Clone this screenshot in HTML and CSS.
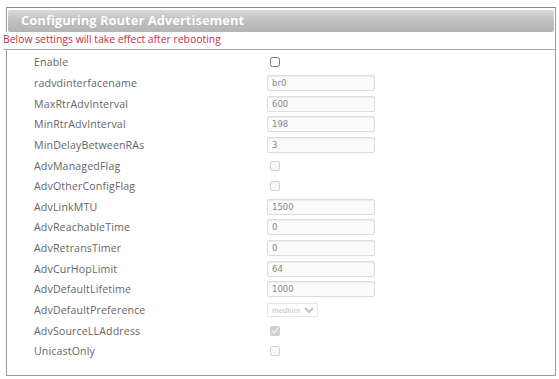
FILE: index.html
```html
<!DOCTYPE html>
<html>
<head>
  <title>Configuring Router Advertisement</title>
  <meta charset="UTF-8">
  <link rel="stylesheet" href="styles.css">
</head>
<body>
<div class="frame">
  <div class="title">Configuring Router Advertisement</div>
  <div class="note">Below settings will take effect after rebooting</div>
  <div class="form">
    <div class="row"><span class="lbl">Enable</span><input type="checkbox" class="chk"></div>
    <div class="row"><span class="lbl">radvdinterfacename</span><input type="text" class="txt" value="br0"></div>
    <div class="row"><span class="lbl">MaxRtrAdvInterval</span><input type="text" class="txt" value="600"></div>
    <div class="row"><span class="lbl">MinRtrAdvInterval</span><input type="text" class="txt" value="198"></div>
    <div class="row"><span class="lbl">MinDelayBetweenRAs</span><input type="text" class="txt" value="3"></div>
    <div class="row"><span class="lbl">AdvManagedFlag</span><input type="checkbox" class="chk" disabled></div>
    <div class="row"><span class="lbl">AdvOtherConfigFlag</span><input type="checkbox" class="chk" disabled></div>
    <div class="row"><span class="lbl">AdvLinkMTU</span><input type="text" class="txt" value="1500"></div>
    <div class="row"><span class="lbl">AdvReachableTime</span><input type="text" class="txt" value="0"></div>
    <div class="row"><span class="lbl">AdvRetransTimer</span><input type="text" class="txt" value="0"></div>
    <div class="row"><span class="lbl">AdvCurHopLimit</span><input type="text" class="txt" value="64"></div>
    <div class="row"><span class="lbl">AdvDefaultLifetime</span><input type="text" class="txt" value="1000"></div>
    <div class="row"><span class="lbl">AdvDefaultPreference</span><select class="sel" disabled><option>medium</option></select></div>
    <div class="row"><span class="lbl">AdvSourceLLAddress</span><input type="checkbox" class="chk" checked disabled></div>
    <div class="row"><span class="lbl">UnicastOnly</span><input type="checkbox" class="chk" disabled></div>
  </div>
</div>
</body>
</html>
```

FILE: styles.css
```css
body {
  margin: 0;
  font-family: "Open Sans", Arial, sans-serif;
  background: #fff;
}
.frame {
  margin: 7px 3px 0 6px;
  height: 367px;
  border: 1px solid #9a9a9a;
  border-top-color: #888;
}
.title {
  margin: 2px 1px 0 1px;
  height: 22px;
  line-height: 21px;
  padding-left: 13px;
  font-size: 13px;
  font-weight: bold;
  color: #fff;
  text-shadow: 0 0 1px #aaa;
  background: linear-gradient(to bottom, #dadada 0%, #c0c0c0 50%, #b4b4b4 100%);
  border-radius: 2px;
}
.note {
  margin-left: -4px;
  height: 17px;
  line-height: 14px;
  font-size: 10.4px;
  color: #c0304a;
  background: #fff;
  border-bottom: 1px solid #aaa;
}
.form {
  padding: 2px 0 0 27px;
}
.row {
  display: flex;
  align-items: center;
  height: 20.65px;
}
.lbl {
  width: 233px;
  font-size: 10.6px;
  letter-spacing: 0.15px;
  color: #666;
}
.txt {
  box-sizing: border-box;
  width: 108px;
  height: 16px;
  margin: 0;
  padding: 0 4px;
  font-family: "DejaVu Sans", sans-serif;
  font-size: 8.5px;
  color: #888;
  background: #fafafa;
  border: 1px solid #ddd;
  border-radius: 2px;
  box-shadow: inset 0 1px 1px rgba(0,0,0,0.06);
}
.chk {
  width: 10px;
  height: 10px;
  margin: 0 0 0 3px;
}
.sel {
  height: 14px;
  margin: 0;
  padding: 0;
  font-size: 8px;
  color: #aaa;
  background: #fff;
  border: 1px solid #ddd;
}
```
